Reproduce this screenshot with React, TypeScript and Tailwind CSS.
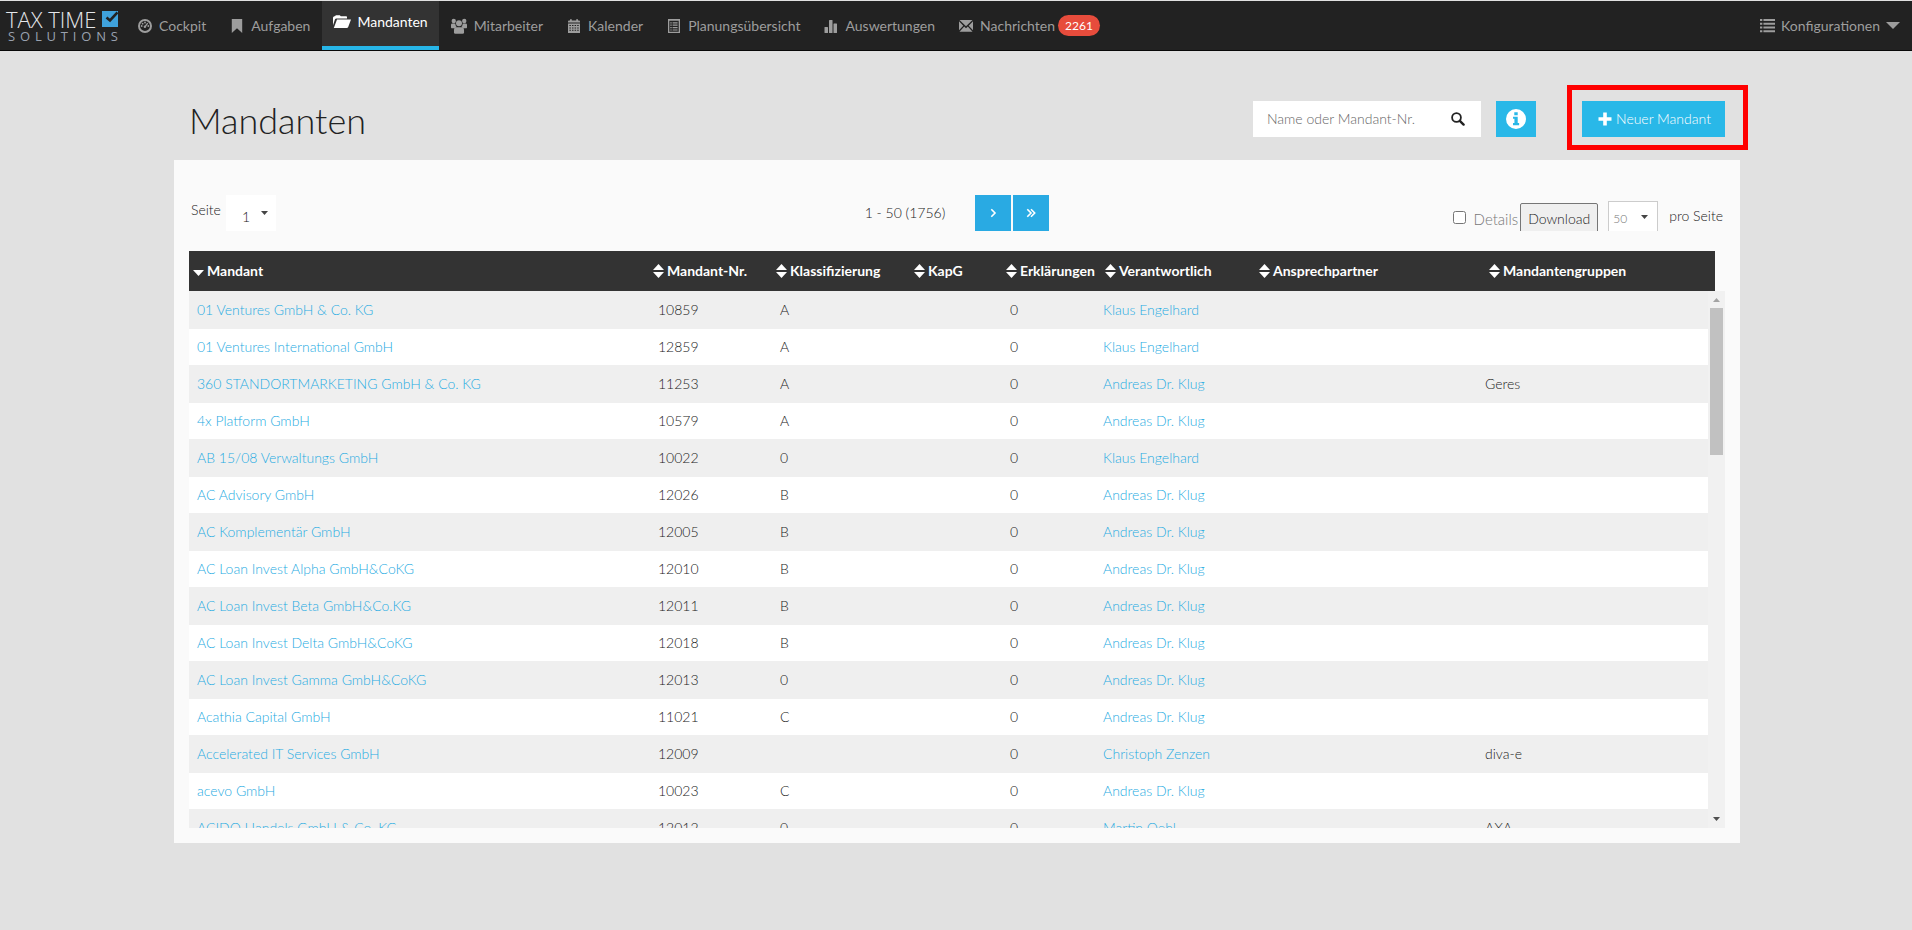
import type { ReactNode } from 'react';

interface Client {
  name: string;
  nr: string;
  rating: string;
  owner: string;
  group?: string;
}

const clients: Client[] = [
  { name: '01 Ventures GmbH & Co. KG', nr: '10859', rating: 'A', owner: 'Klaus Engelhard' },
  { name: '01 Ventures International GmbH', nr: '12859', rating: 'A', owner: 'Klaus Engelhard' },
  { name: '360 STANDORTMARKETING GmbH & Co. KG', nr: '11253', rating: 'A', owner: 'Andreas Dr. Klug', group: 'Geres' },
  { name: '4x Platform GmbH', nr: '10579', rating: 'A', owner: 'Andreas Dr. Klug' },
  { name: 'AB 15/08 Verwaltungs GmbH', nr: '10022', rating: '0', owner: 'Klaus Engelhard' },
  { name: 'AC Advisory GmbH', nr: '12026', rating: 'B', owner: 'Andreas Dr. Klug' },
  { name: 'AC Komplementär GmbH', nr: '12005', rating: 'B', owner: 'Andreas Dr. Klug' },
  { name: 'AC Loan Invest Alpha GmbH&CoKG', nr: '12010', rating: 'B', owner: 'Andreas Dr. Klug' },
  { name: 'AC Loan Invest Beta GmbH&Co.KG', nr: '12011', rating: 'B', owner: 'Andreas Dr. Klug' },
  { name: 'AC Loan Invest Delta GmbH&CoKG', nr: '12018', rating: 'B', owner: 'Andreas Dr. Klug' },
  { name: 'AC Loan Invest Gamma GmbH&CoKG', nr: '12013', rating: '0', owner: 'Andreas Dr. Klug' },
  { name: 'Acathia Capital GmbH', nr: '11021', rating: 'C', owner: 'Andreas Dr. Klug' },
  { name: 'Accelerated IT Services GmbH', nr: '12009', rating: '', owner: 'Christoph Zenzen', group: 'diva-e' },
  { name: 'acevo GmbH', nr: '10023', rating: 'C', owner: 'Andreas Dr. Klug' },
  { name: 'ACIDO Handels GmbH & Co. KG', nr: '12012', rating: '0', owner: 'Martin Oehl', group: 'AXA' },
];

const columns = ['Mandant', 'Mandant-Nr.', 'Klassifizierung', 'KapG', 'Erklärungen', 'Verantwortlich', 'Ansprechpartner', 'Mandantengruppen'];

function Icon({ children, className = 'size-3.5' }: { children: ReactNode; className?: string }) {
  return (
    <svg className={`shrink-0 ${className}`} viewBox="0 0 14 14" fill="currentColor" aria-hidden="true">
      {children}
    </svg>
  );
}

const icons = {
  dashboard: (
    <Icon>
      <circle cx="7" cy="7" r="6" fill="none" stroke="currentColor" strokeWidth="2" />
      <circle cx="3.700" cy="7" r="0.900" />
      <circle cx="4.600" cy="4.700" r="0.900" />
      <circle cx="7" cy="3.500" r="0.900" />
      <circle cx="10.300" cy="7" r="0.900" />
      <path d="M9.200 3.800 10.200 4.400 8.200 7.300a1.300 1.300 0 1 1-1.200-.9z" />
    </Icon>
  ),
  bookmark: (
    <Icon>
      <path d="M1.8 0h10.4v14L7 9.2 1.8 14z" />
    </Icon>
  ),
  folder: (
    <Icon className="h-3.5 w-[18px]">
      <path d="M-2 10.2V2.4L-1 1.2h1l.8-1h4l1 1h5.4q.8 0 .8.9v1.3H1.4Q.4 3.4 0 4.3z" />
      <path d="M2 4.5h14L13.2 12q-.4 1-1.4 1H-1.2z" />
    </Icon>
  ),
  people: (
    <Icon className="size-4">
      <circle cx="2.4" cy="2.6" r="1.9" />
      <circle cx="11.6" cy="2.6" r="1.9" />
      <circle cx="7" cy="4.6" r="2.6" />
      <path d="M0 8V6q0-1.2 1.3-1.2h2.4Q3.9 6.8 5 7.8L3.4 9H.6Q0 9 0 8zM14 8V6q0-1.2-1.3-1.2h-2.4Q10.100 6.800 9 7.800L10.600 9h2.800Q14 9 14 8z" />
      <path d="M2.600 12.600v-2.400q0-2 2-2h4.800q2 0 2 2v2.400q0 1.100-1.200 1.100H3.800q-1.200 0-1.200-1.100z" />
    </Icon>
  ),
  calendar: (
    <Icon>
      <path d="M1 3.600V2.400q0-1 1-1h1V.2h1.800v1.200h4.400V.2H11v1.200h1q1 0 1 1v1.200z" />
      <path
        fillRule="evenodd"
        d="M1 4.500h12V14H1zM2.400 6v1h1.500V6zM5 6v1h1.500V6zM7.600 6v1h1.500V6zM10.200 6v1h1.500V6zM2.400 8.400v1h1.500v-1zM5 8.400v1h1.500v-1zM7.600 8.400v1h1.500v-1zM10.200 8.400v1h1.500v-1zM2.400 10.800v1h1.500v-1zM5 10.800v1h1.500v-1zM7.600 10.800v1h1.500v-1zM10.200 10.800v1h1.500v-1z"
      />
    </Icon>
  ),
  plan: (
    <Icon>
      <path
        fillRule="evenodd"
        d="M1 0h12v14H1zM2.300 1.800v10.900h9.400V1.800zM3.300 3.200h1.400v1.200H3.300zM5.600 3.200h5v1.200h-5zM3.300 5.600h1.400v1.200H3.300zM5.600 5.600h5v1.200h-5zM3.300 8h1.400v1.200H3.300zM5.600 8h5v1.200h-5zM3.300 10.400h1.400v1.200H3.300zM5.600 10.400h5v1.200h-5z"
      />
    </Icon>
  ),
  stats: (
    <Icon>
      <rect x="0.500" y="8" width="3.500" height="6" rx="0.500" />
      <rect x="5" y="1" width="3.500" height="13" rx="0.500" />
      <rect x="9.500" y="4.500" width="3.500" height="9.500" rx="0.500" />
    </Icon>
  ),
  mail: (
    <Icon>
      <path d="M.5 1h13L7 7.200zM0 2.300 4.300 6.700 0 11.300zM14 2.300 9.700 6.700l4.300 4.600zM5.200 7.500 7 9.200l1.800-1.700 4.700 5.300H.5z" />
    </Icon>
  ),
  list: (
    <Icon className="size-[15px]">
      <path d="M0 1h2.200v1.800H0zM3.200 1H14v1.800H3.200zM0 4.500h2.200v1.800H0zM3.200 4.500H14v1.800H3.200zM0 8h2.200v1.800H0zM3.200 8H14v1.800H3.200zM0 11.500h2.200v1.800H0zM3.200 11.500H14v1.800H3.200z" />
    </Icon>
  ),
};

const links = [
  { label: 'Cockpit', icon: icons.dashboard },
  { label: 'Aufgaben', icon: icons.bookmark },
  { label: 'Mandanten', icon: icons.folder, active: true },
  { label: 'Mitarbeiter', icon: icons.people },
  { label: 'Kalender', icon: icons.calendar },
  { label: 'Planungsübersicht', icon: icons.plan },
  { label: 'Auswertungen', icon: icons.stats },
  { label: 'Nachrichten', icon: icons.mail, badge: '2261' },
];

function Logo() {
  return (
    <a href="#" className="mr-2 flex w-[118px] shrink-0 flex-col pt-2 pl-1.5 font-['Open_Sans'] text-gray-200">
      <span className="flex items-center justify-between">
        <span className="text-[22px] leading-5 font-light">TAX TIME</span>
        <svg className="size-4" viewBox="0 0 16 16" aria-hidden="true">
          <path d="M0 0h16v16H0z" fill="#3fa2dc" />
          <path d="M4.500 6.500 8 9.500 15.500 1.500" fill="none" stroke="#222" strokeWidth="2.600" />
        </svg>
      </span>
      <span className="flex justify-between pl-0.5 text-[13px] leading-[15px] text-gray-400">
        {'SOLUTIONS'.split('').map((letter, i) => (
          <span key={i}>{letter}</span>
        ))}
      </span>
    </a>
  );
}

function NavBar() {
  return (
    <nav className="flex h-[51px] border-t border-b border-t-[#e1e1e1] border-b-[#080808] bg-[#222] text-sm text-[#9d9d9d]">
      <Logo />
      {links.map((link) => (
        <a
          key={link.label}
          href="#"
          className={
            link.active
              ? 'flex items-center gap-1.5 border-b-4 border-[#27b6e8] bg-[#333] px-[11px] pb-1 text-white'
              : 'flex items-center gap-[7px] px-3'
          }
        >
          {link.icon}
          <span>{link.label}</span>
          {link.badge && (
            <span className="-ml-1 rounded-full bg-[#e74c3c] px-[7px] py-0.5 text-xs leading-[17px] text-white">{link.badge}</span>
          )}
        </a>
      ))}
      <a href="#" className="ml-auto flex items-center gap-1.5 pr-3">
        {icons.list}
        <span>Konfigurationen</span>
        <svg className="h-[7px] w-3.5" viewBox="0 0 14 7" fill="currentColor" aria-hidden="true">
          <path d="M0 0h14L7 7z" />
        </svg>
      </a>
    </nav>
  );
}

function Caret({ className }: { className: string }) {
  return (
    <svg className={`pointer-events-none absolute h-1 w-[7px] ${className}`} viewBox="0 0 7 4" fill="#444" aria-hidden="true">
      <path d="M0 0h7L3.500 4z" />
    </svg>
  );
}

function SortIcon({ single }: { single: boolean }) {
  return (
    <svg className="h-3.5 w-[11px] shrink-0" viewBox="0 0 11 14" fill="currentColor" aria-hidden="true">
      {!single && <path d="M5.500 0 11 6H0z" />}
      <path d={single ? 'M0 6h11L5.500 12z' : 'M0 8h11L5.500 14z'} />
    </svg>
  );
}

function Toolbar() {
  return (
    <div className="grid h-9 grid-cols-3">
      <div className="flex gap-[5px]">
        <label htmlFor="page" className="pt-[3px] pl-0.5 leading-6">
          Seite
        </label>
        <div className="relative">
          <select id="page" className="h-9 w-[50px] appearance-none bg-white pt-2 pl-4 outline-none">
            <option>1</option>
          </select>
          <Caret className="top-4 right-2" />
        </div>
      </div>
      <div className="flex items-center justify-center">
        <span className="mr-[30px]">1 - 50 (1756)</span>
        <button type="button" aria-label="Nächste Seite" className="mr-0.5 flex size-9 items-center justify-center bg-[#29aae3] text-white">
          <svg className="size-2.5" viewBox="0 0 10 10" fill="none" stroke="currentColor" strokeWidth="1.600">
            <path d="M3.300 1.300 7 5 3.300 8.700" />
          </svg>
        </button>
        <button type="button" aria-label="Letzte Seite" className="flex size-9 items-center justify-center bg-[#29aae3] text-white">
          <svg className="size-2.5" viewBox="0 0 10 10" fill="none" stroke="currentColor" strokeWidth="1.600">
            <path d="M1.300 1.300 5 5 1.300 8.700M5 1.300 8.700 5 5 8.700" />
          </svg>
        </button>
      </div>
      <div className="flex h-9 items-start justify-end overflow-hidden">
        <label className="flex items-center gap-2 pt-3 pr-0.5 text-[15px] leading-6 text-[#777]">
          <input type="checkbox" className="mb-1 size-[13px]" />
          Details
        </label>
        <button type="button" className="mt-2 h-8 rounded-xs border border-[#767676] bg-[#efefef] px-[7px] text-[#222]">
          Download
        </button>
        <div className="relative mr-[11px] ml-2.5">
          <select
            aria-label="Einträge pro Seite"
            className="mt-1.5 h-9 w-[50px] appearance-none border border-[#ccc] bg-white pl-1 text-xs text-[#777] outline-none"
          >
            <option>50</option>
          </select>
          <Caret className="top-5 right-2.5" />
        </div>
        <span className="pt-[9px] pr-0.5 leading-6">pro Seite</span>
      </div>
    </div>
  );
}

function ClientTable() {
  return (
    <div className="mt-5">
      <div className="pr-2.5">
        <table className="w-full table-fixed bg-[#333] text-left text-white">
          <colgroup>
            <col />
            <col className="w-[123px]" />
            <col className="w-[138px]" />
            <col className="w-[92px]" />
            <col className="w-[99px]" />
            <col className="w-[154px]" />
            <col className="w-[230px]" />
            <col className="w-[230px]" />
          </colgroup>
          <thead>
            <tr className="h-10">
              {columns.map((column, i) => (
                <th key={column} className="py-0 pl-1 font-bold whitespace-nowrap">
                  <span className="flex items-center gap-[3px]">
                    <SortIcon single={i === 0} />
                    {column}
                  </span>
                </th>
              ))}
            </tr>
          </thead>
        </table>
      </div>
      <div className="flex h-[537px]">
        <div className="grow overflow-hidden">
          <table className="w-full table-fixed">
            <colgroup>
              <col />
              <col className="w-[122px]" />
              <col className="w-[138px]" />
              <col className="w-[92px]" />
              <col className="w-[93px]" />
              <col className="w-[154px]" />
              <col className="w-[228px]" />
              <col className="w-[231px]" />
            </colgroup>
            <tbody>
              {clients.map((client) => (
                <tr key={client.nr} className="h-[37px] border-t border-[#efefef] bg-white odd:bg-[#efefef]">
                  <td className="px-2 py-0">
                    <a href="#" className="text-[#1fabe2]">{client.name}</a>
                  </td>
                  <td className="px-2 py-0">{client.nr}</td>
                  <td className="px-2 py-0">{client.rating}</td>
                  <td />
                  <td className="px-2 py-0">0</td>
                  <td className="px-2 py-0">
                    <a href="#" className="text-[#1fabe2]">{client.owner}</a>
                  </td>
                  <td />
                  <td className="px-2 py-0">{client.group}</td>
                </tr>
              ))}
            </tbody>
          </table>
        </div>
        <div className="flex w-[17px] shrink-0 flex-col items-center bg-[#f1f1f1]" aria-hidden="true">
          <svg className="mt-[7px] mb-1.5 h-1 w-[7px]" viewBox="0 0 7 4" fill="#a3a3a3">
            <path d="M0 4h7L3.500 0z" />
          </svg>
          <div className="h-[147px] w-[13px] bg-[#c1c1c1]" />
          <svg className="mt-auto mb-[7px] h-1 w-[7px]" viewBox="0 0 7 4" fill="#505050">
            <path d="M0 0h7L3.500 4z" />
          </svg>
        </div>
      </div>
    </div>
  );
}

export default function App() {
  return (
    <div className="min-h-screen bg-[#e1e1e1] font-['Lato',sans-serif] text-sm text-[#222]">
      <NavBar />
      <main className="mr-[172px] ml-[174px] pt-[50px] font-light">
        <header className="flex h-9 items-center px-[15px]">
          <h1 className="mr-auto pt-0.5 text-4xl font-light">Mandanten</h1>
          <form className="flex h-9 w-[228px] items-center bg-white pr-4 pl-3.5">
            <input
              type="text"
              aria-label="Suche"
              placeholder="Name oder Mandant-Nr."
              className="min-w-0 grow outline-none placeholder:text-[#666]"
            />
            <button type="submit" aria-label="Suchen" className="text-[#222]">
              <Icon>
                <circle cx="5.500" cy="5.500" r="4.400" fill="none" stroke="currentColor" strokeWidth="1.800" />
                <path d="m8.800 8.800 3.800 3.800" stroke="currentColor" strokeWidth="2.400" strokeLinecap="round" />
              </Icon>
            </button>
          </form>
          <button type="button" aria-label="Info" className="ml-[15px] flex h-9 w-10 items-center justify-center bg-[#29b8e8] text-white">
            <Icon className="size-5">
              <path fillRule="evenodd" d="M7 0a7 7 0 1 0 0 14A7 7 0 0 0 7 0zM5.800 2.300h2.400v2H5.800zM4.900 5.400h3.300v4.400h1v1.500H4.900V9.800h1V6.900h-1z" />
            </Icon>
          </button>
          <div className="relative ml-[46px]">
            <button type="button" className="flex h-9 w-[143px] items-center justify-center gap-1 bg-[#29b8e8] pl-0.5 text-white">
              <Icon>
                <path d="M5.200.5h3.600v4.700h4.700v3.600H8.800v4.700H5.200V8.800H.5V5.200h4.700z" />
              </Icon>
              Neuer Mandant
            </button>
            <div className="pointer-events-none absolute -top-4 -right-[23px] -bottom-[13px] -left-[15px] border-5 border-[#ff0000]" />
          </div>
        </header>
        <section className="mt-[23px] bg-[#fafafa] px-[15px] pt-[35px] pb-[15px]">
          <Toolbar />
          <ClientTable />
        </section>
      </main>
    </div>
  );
}
